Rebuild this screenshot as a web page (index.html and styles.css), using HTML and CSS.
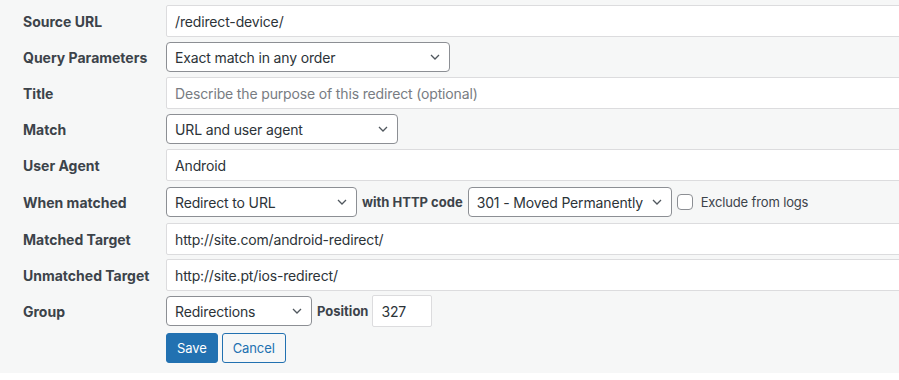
FILE: index.html
```html
<!DOCTYPE html>
<html lang="en">
<head>
    <meta charset="utf-8">
    <title>Edit redirect</title>
    <link rel="stylesheet" href="styles.css">
</head>
<body>

    <!-- redirect edit form -->
    <form class="edit">
        <div class="row">
            <label class="name">Source URL</label>
            <div class="field wide"><input class="text" type="text" value="/redirect-device/"></div>
        </div>
        <div class="row">
            <label class="name">Query Parameters</label>
            <div class="field">
                <span class="select w-query">
                    <select><option>Exact match in any order</option></select>
                    <svg class="chev" width="10" height="6" viewBox="0 0 10 6"><path d="M1 1l4 4 4-4" /></svg>
                </span>
            </div>
        </div>
        <div class="row">
            <label class="name">Title</label>
            <div class="field wide"><input class="text" type="text" placeholder="Describe the purpose of this redirect (optional)"></div>
        </div>
        <div class="row">
            <label class="name">Match</label>
            <div class="field">
                <span class="select w-match">
                    <select><option>URL and user agent</option></select>
                    <svg class="chev" width="10" height="6" viewBox="0 0 10 6"><path d="M1 1l4 4 4-4" /></svg>
                </span>
            </div>
        </div>
        <div class="row">
            <label class="name">User Agent</label>
            <div class="field wide"><input class="text" type="text" value="Android"></div>
        </div>
        <div class="row row-when">
            <label class="name">When matched</label>
            <div class="field">
                <span class="select w-action">
                    <select><option>Redirect to URL</option></select>
                    <svg class="chev" width="10" height="6" viewBox="0 0 10 6"><path d="M1 1l4 4 4-4" /></svg>
                </span>
                <strong class="inline">with HTTP code</strong>
                <span class="select w-code">
                    <select><option>301 - Moved Permanently</option></select>
                    <svg class="chev" width="10" height="6" viewBox="0 0 10 6"><path d="M1 1l4 4 4-4" /></svg>
                </span>
                <label class="check"><input type="checkbox"> Exclude from logs</label>
            </div>
        </div>
        <div class="row">
            <label class="name">Matched Target</label>
            <div class="field wide"><input class="text" type="text" value="http://site.com/android-redirect/"></div>
        </div>
        <div class="row">
            <label class="name">Unmatched Target</label>
            <div class="field wide"><input class="text" type="text" value="http://site.pt/ios-redirect/"></div>
        </div>
        <div class="row">
            <label class="name">Group</label>
            <div class="field">
                <span class="select w-group">
                    <select><option>Redirections</option></select>
                    <svg class="chev" width="10" height="6" viewBox="0 0 10 6"><path d="M1 1l4 4 4-4" /></svg>
                </span>
                <strong class="inline">Position</strong>
                <input class="text small" type="text" value="327">
            </div>
        </div>
        <div class="actions">
            <button type="button" class="button primary">Save</button>
            <button type="button" class="button">Cancel</button>
        </div>
    </form>

</body>
</html>
```

FILE: styles.css
```css
* {
    margin: 0;
    padding: 0;
    box-sizing: border-box;
}

body {
    background: #fff;
    font-family: Inter, "Liberation Sans", sans-serif;
    font-size: 14px;
    color: #2c3338;
}

.edit {
    background: #f6f7f7;
    padding: 3px 0 10px;
}

.row {
    display: grid;
    grid-template-columns: 166px 1fr;
    align-items: center;
    height: 36px;
}

.row-when {
    height: 38px;
}

.name {
    padding-left: 23px;
    font-weight: 700;
    color: #3c434a;
}

.field {
    display: flex;
    align-items: center;
    min-width: 0;
}

/* text inputs run on past the right edge of the page */
.field.wide {
    overflow: hidden;
}

.text {
    width: 100%;
    height: 32px;
    padding: 0 8px;
    border: 1px solid #dcdcde;
    border-radius: 2px;
    background: #fff;
    font: inherit;
    letter-spacing: -0.15px;
    color: #2c3338;
}

.field.wide .text {
    flex: none;
    width: calc(100% + 4px);
}

.text::placeholder {
    color: #787c82;
}

.text.small {
    width: 60px;
    height: 32px;
}

/* select with chevron drawn on top */
.select {
    position: relative;
    display: inline-block;
    flex: none;
}

.select select {
    appearance: none;
    -webkit-appearance: none;
    width: 100%;
    height: 30px;
    padding: 0 24px 0 8px;
    border: 1px solid #8c8f94;
    border-radius: 4px;
    background: #fff;
    font: inherit;
    letter-spacing: -0.15px;
    color: #2c3338;
}

.chev {
    position: absolute;
    right: 10px;
    top: 12px;
    fill: none;
    stroke: #50575e;
    stroke-width: 1.3;
    pointer-events: none;
}

.w-query { width: 284px; }
.w-match { width: 232px; }
.w-action { width: 191px; }
.w-code { width: 204px; }
.w-group { width: 146px; }

.inline {
    margin: 0 5px;
    font-size: 13px;
    font-weight: 700;
    color: #3c434a;
    white-space: nowrap;
}

.w-group + .inline {
    margin-right: 4px;
}

.check {
    display: flex;
    align-items: center;
    gap: 8px;
    margin-left: 5px;
    font-size: 13px;
    letter-spacing: -0.15px;
    color: #3c434a;
}

.check input {
    appearance: none;
    -webkit-appearance: none;
    width: 16px;
    height: 16px;
    border: 1px solid #8c8f94;
    border-radius: 4px;
    background: #fff;
}

.actions {
    display: flex;
    gap: 4px;
    padding: 4px 0 0 166px;
}

.button {
    height: 30px;
    padding: 0 10px;
    border: 1px solid #2271b1;
    border-radius: 3px;
    background: #f6f7f7;
    color: #2271b1;
    font: inherit;
    font-size: 13px;
    letter-spacing: -0.1px;
}

.button.primary {
    background: #2271b1;
    color: #fff;
}
```
